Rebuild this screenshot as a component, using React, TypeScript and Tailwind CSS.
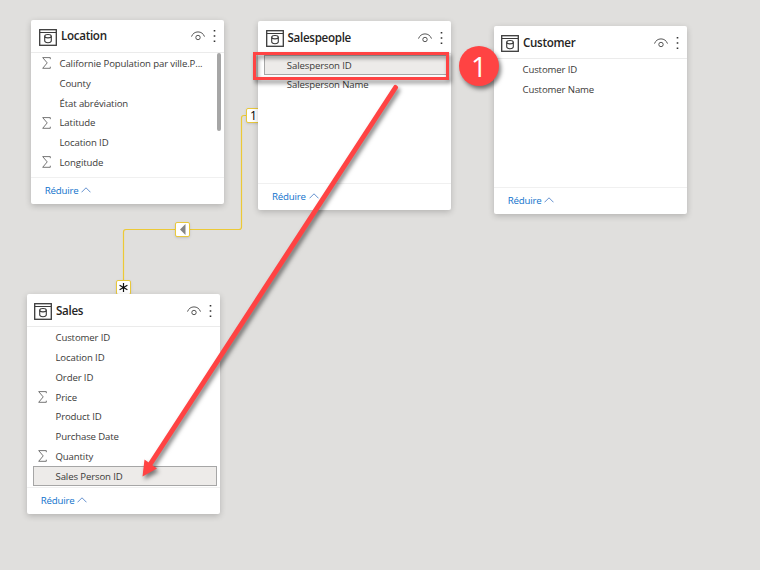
import React from "react";

type Field = { name: string; sum?: boolean; selected?: boolean };

function TableIcon() {
  return (
    <svg width="18" height="17" viewBox="0 0 18 17" fill="none" stroke="#3a3a3a" className="shrink-0">
      <rect x="0.7" y="0.7" width="16.600" height="15.600" strokeWidth="1.300" />
      <path d="M1 3.500H17" strokeWidth="1" />
      <ellipse cx="9" cy="7.200" rx="3.300" ry="1.700" strokeWidth="1.100" />
      <path d="M5.700 7.200v4.600c0 1.100 1.400 1.900 3.300 1.900s3.300-.8 3.300-1.900V7.200" strokeWidth="1.100" />
    </svg>
  );
}

function Eye() {
  return (
    <svg width="14" height="10" viewBox="0 0 14 10" fill="none" stroke="#444" strokeWidth="0.9" className="shrink-0">
      <path d="M.5 5.600C1.600 2.600 4 .9 7 .9s5.400 1.700 6.500 4.700" />
      <circle cx="7" cy="6.500" r="2.200" />
    </svg>
  );
}

function Sigma() {
  return (
    <svg width="9" height="12" viewBox="0 0 9 12" fill="none" stroke="#666" strokeWidth="0.9">
      <path d="M8.300 2.200V.6H.7L5.200 5.900.7 11.300h7.600V9.700" />
    </svg>
  );
}

function Card({
  title,
  fields,
  place,
  rowsPad,
  iconPad,
  headPad,
  scroll,
}: {
  title: string;
  fields: Field[];
  place: string;
  rowsPad: string;
  iconPad: string;
  headPad: string;
  scroll?: boolean;
}) {
  return (
    <section className={`absolute flex w-[193.3px] flex-col rounded-[2px] bg-white shadow-[0_2px_6px_rgba(0,0,0,0.2)] ${place}`}>
      <header className={`flex h-[33px] shrink-0 items-center border-b border-[#ebebeb] pr-[8px] ${iconPad}`}>
        <div className="pt-[2px]"><TableIcon /></div>
        <div className={`flex flex-1 items-center ${headPad}`}>
          <h2 className="ml-[4px] flex-1 text-[11.6px] leading-[16px] font-semibold tracking-[-0.3px] text-[#252423]">{title}</h2>
          <Eye />
          <svg width="3" height="12" viewBox="0 0 3 12" fill="#333" className="ml-[8px]">
            <path d="M.7 0h1.600v1.600H.7zM.7 5.200h1.600v1.600H.7zM.7 10.400h1.600V12H.7z" />
          </svg>
        </div>
      </header>
      <div className={`flex-1 ${rowsPad}`}>
        {fields.map((f) => (
          <div
            key={f.name}
            className={`ml-[6px] mr-[3px] flex h-[19.8px] items-center ${f.selected ? "border border-[#a6a6a6] bg-[#edebe9] pl-[4px]" : "pl-[5px]"}`}
          >
            <span className="w-[17.800px] shrink-0">{f.sum && <Sigma />}</span>
            <span className="pt-[1.500px] text-[9.6px] leading-[14px] tracking-[-0.12px] whitespace-nowrap text-[#3b3a39]">{f.name}</span>
          </div>
        ))}
      </div>
      {scroll && <div className="absolute top-[33px] right-[3px] h-[78px] w-[4px] rounded-[2px] bg-[#a6a6a6]" />}
      <footer className="flex h-[27px] shrink-0 items-center gap-[4px] border-t border-[#f0f0f0] pl-[14px] text-[9.7px] tracking-[-0.2px] text-[#0f72cc]">
        <span className="pt-[1px]">Réduire</span>
        <svg width="10" height="6" viewBox="0 0 10 6" fill="none" stroke="#5484c8" strokeWidth="0.9" className="-ml-[1px] mb-[3px]">
          <path d="M.5 5.300 5 .8l4.500 4.500" />
        </svg>
      </footer>
    </section>
  );
}

export default function App() {
  return (
    <main className="relative h-[570px] w-[760px] overflow-hidden bg-[#e0dfdd] font-['Open_Sans','Noto_Sans',sans-serif]">
      <svg className="absolute inset-0" width="760" height="570" fill="none">
        <path d="M248 115.500h-4q-2.500 0-2.500 2.500V227q0 2.500-2.500 2.500H126q-2.500 0-2.500 2.500v50" stroke="#ecc936" strokeWidth="1.200" />
      </svg>
      <div className="absolute top-[108px] left-[246px] flex h-[15px] w-[15px] items-center justify-center rounded-[2px] border border-[#e8c83c] bg-white text-[12px] text-black shadow-sm">1</div>
      <div className="absolute top-[222px] left-[175px] flex h-[15px] w-[15px] items-center justify-center rounded-[2px] border border-[#e8c83c] bg-white shadow-sm">
        <svg width="6" height="11" viewBox="0 0 6 11"><path d="M5.500 0v11L0 5.500z" fill="#858585" /></svg>
      </div>
      <div className="absolute top-[280px] left-[116px] flex h-[15px] w-[15px] items-center justify-center rounded-[2px] border border-[#e8c83c] bg-white shadow-sm">
        <svg width="9" height="9" viewBox="0 0 9 9" stroke="#111" strokeWidth="1.200"><path d="M4.500 0v9M.6 2.200l7.800 4.600M8.400 2.200.6 6.800" /></svg>
      </div>

      <Card
        title="Location"
        place="top-[20px] left-[30.7px] h-[184px]"
        iconPad="pl-[8.3px]"
        rowsPad="pt-[0.3px]"
        headPad="pt-0"
        scroll
        fields={[
          { name: "Californie Population par ville.P...", sum: true },
          { name: "County" },
          { name: "État abréviation" },
          { name: "Latitude", sum: true },
          { name: "Location ID" },
          { name: "Longitude", sum: true },
        ]}
      />
      <Card
        title="Salespeople"
        place="top-[21px] left-[258px] h-[189px]"
        iconPad="pl-[7.500px]"
        rowsPad="pt-[1px]"
        headPad="pt-[2px]"
        fields={[{ name: "Salesperson ID", selected: true }, { name: "Salesperson Name" }]}
      />
      <Card
        title="Customer"
        place="top-[26px] left-[493.7px] h-[188px]"
        iconPad="pl-[7.3px]"
        rowsPad="pt-[0.5px]"
        headPad="pt-[2px]"
        fields={[{ name: "Customer ID" }, { name: "Customer Name" }]}
      />
      <Card
        title="Sales"
        place="top-[294px] left-[26.7px] h-[220px]"
        iconPad="pl-[7.3px]"
        rowsPad="pt-[0.5px]"
        headPad="pt-[2px]"
        fields={[
          { name: "Customer ID" },
          { name: "Location ID" },
          { name: "Order ID" },
          { name: "Price", sum: true },
          { name: "Product ID" },
          { name: "Purchase Date" },
          { name: "Quantity", sum: true },
          { name: "Sales Person ID", selected: true },
        ]}
      />

      <svg className="absolute inset-0 drop-shadow-[2px_3px_2px_rgba(0,0,0,0.5)]" width="760" height="570" fill="none">
        <rect x="254.500" y="53.500" width="193" height="25" stroke="#ff4343" strokeWidth="3" />
        <path d="M395.500 87.500 151 463" stroke="#ff4343" strokeWidth="5" strokeLinecap="round" />
        <path d="M142.500 476.500 144.500 459.500l12.500 9z" fill="#ff4343" />
        <circle cx="479" cy="66" r="20" fill="#ff4343" />
      </svg>
      <div className="absolute top-[46px] left-[459px] flex h-[40px] w-[40px] items-center justify-center text-[28px] leading-none text-white">1</div>
    </main>
  );
}
